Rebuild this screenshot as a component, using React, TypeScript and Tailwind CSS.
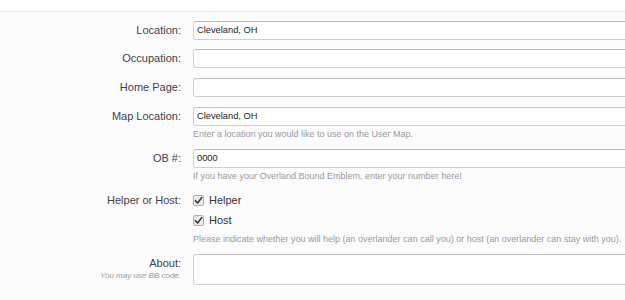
import React from 'react';

const font = { fontFamily: '"Liberation Sans", Arial, sans-serif' };

// a text input row: label on the left, input running past the right edge
const Row = ({ label, value, hint }: { label: string; value?: string; hint?: string }) => (
  <div className="grid grid-cols-[181px_1fr] gap-x-[12px]">
    <div className="h-[19px] flex items-center justify-end text-[11px] text-[#3f3f46]">{label}</div>
    <div>
      <div className="h-[19px] w-[520px] bg-white border border-[#cfcfcf] border-t-[#bdbdbd] rounded-[3px] flex items-center px-[3px] text-[9.3px] text-[#222]">
        {value}
      </div>
      {hint && <div className="mt-[2px] h-[12px] leading-[12px] text-[9px] text-[#9a9a9a] whitespace-nowrap">{hint}</div>}
    </div>
  </div>
);

const Check = ({ label }: { label: string }) => (
  <div className="h-[20px] flex items-center gap-[5px]">
    <span className="w-[11px] h-[11px] rounded-[2px] border border-[#b0b0b0] bg-[#ececec] flex items-center justify-center">
      <svg viewBox="0 0 10 10" className="w-[9px] h-[9px]">
        <path d="M1.5 5.2 L4 7.8 L8.6 1.8" fill="none" stroke="#333" strokeWidth="1.7" strokeLinecap="round" strokeLinejoin="round" />
      </svg>
    </span>
    <span className="text-[11px] text-[#333]">{label}</span>
  </div>
);

export default function App() {
  return (
    <div className="w-[625px] h-[300px] overflow-hidden bg-[#fcfcfd]" style={font}>
      <div className="h-[12px] bg-[#fdfdff] border-b border-[#e4eaf4]" />
      <div className="pt-[9px] flex flex-col">
        <Row label="Location:" value="Cleveland, OH" />
        <div className="mt-[9px]"><Row label="Occupation:" /></div>
        <div className="mt-[10px]"><Row label="Home Page:" /></div>
        <div className="mt-[10px]"><Row label="Map Location:" value="Cleveland, OH" hint="Enter a location you would like to use on the User Map." /></div>
        <div className="mt-[9px]"><Row label="OB #:" value="0000" hint="If you have your Overland Bound Emblem, enter your number here!" /></div>

        {/* helper / host checkboxes */}
        <div className="grid grid-cols-[181px_1fr] gap-x-[12px] mt-[8px]">
          <div className="h-[20px] flex items-center justify-end text-[11px] text-[#3f3f46]">Helper or Host:</div>
          <div>
            <Check label="Helper" />
            <Check label="Host" />
            <div className="mt-[3px] h-[12px] leading-[12px] text-[9px] text-[#9a9a9a] whitespace-nowrap">
              Please indicate whether you will help (an overlander can call you) or host (an overlander can stay with you).
            </div>
          </div>
        </div>

        <div className="grid grid-cols-[181px_1fr] gap-x-[12px] mt-[9px]">
          <div className="flex flex-col items-end pt-[3px]">
            <span className="text-[11px] leading-[13px] text-[#3f3f46]">About:</span>
            <span className="text-[8px] leading-[11px] italic text-[#9a9a9a]">You may use BB code.</span>
          </div>
          <div className="h-[31px] w-[520px] bg-white border border-[#cfcfcf] border-t-[#bdbdbd] rounded-[3px]" />
        </div>
      </div>
    </div>
  );
}
